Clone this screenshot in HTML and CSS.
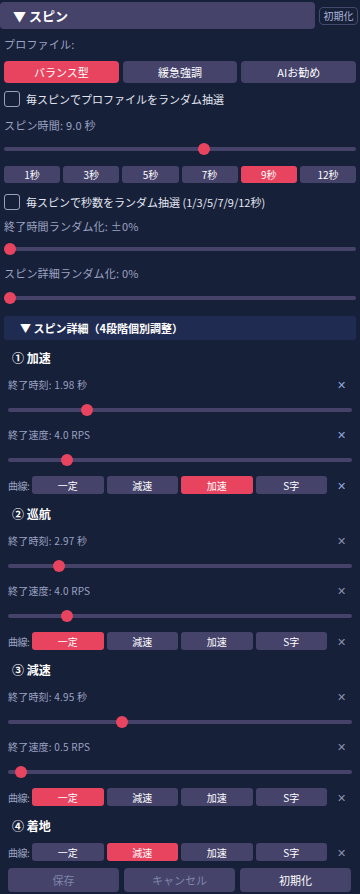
FILE: index.html
```html
<!DOCTYPE html>
<html lang="ja">
<head>
<meta charset="UTF-8">
<meta name="viewport" content="width=device-width, initial-scale=1.0">
<title>スピン設定</title>
<link rel="stylesheet" href="styles.css">
</head>
<body>
<!-- Spin header -->
<div class="topbar">
  <div class="topbar-title">▼ スピン</div>
  <button class="reset-small">初期化</button>
</div>

<div class="panel">
  <div class="label">プロファイル:</div>
  <div class="profiles">
    <button class="btn active">バランス型</button>
    <button class="btn">緩急強調</button>
    <button class="btn">AIお勧め</button>
  </div>
  <label class="check"><input type="checkbox"><span>毎スピンでプロファイルをランダム抽選</span></label>

  <div class="label gap-10">スピン時間: 9.0 秒</div>
  <input type="range" class="range gap-10" min="1" max="15" step="0.1" value="9">

  <div class="seconds">
    <button class="btn">1秒</button>
    <button class="btn">3秒</button>
    <button class="btn">5秒</button>
    <button class="btn">7秒</button>
    <button class="btn active">9秒</button>
    <button class="btn">12秒</button>
  </div>
  <label class="check gap-10"><input type="checkbox"><span>毎スピンで秒数をランダム抽選 (1/3/5/7/9/12秒)</span></label>

  <div class="label gap-8">終了時間ランダム化: ±0%</div>
  <input type="range" class="range gap-9" min="0" max="100" value="0">
  <div class="label gap-10">スピン詳細ランダム化: 0%</div>
  <input type="range" class="range gap-11" min="0" max="100" value="0">

  <!-- Spin detail -->
  <div class="section-bar">▼ スピン詳細（4段階個別調整）</div>
  <div class="detail">
    <div class="stage first">
      <div class="stage-title">① 加速</div>
      <div class="param"><span>終了時刻: 1.98 秒</span><button class="clear blue">✕</button></div>
      <input type="range" class="range small" min="0" max="100" step="0.1" value="22">
      <div class="param"><span>終了速度: 4.0 RPS</span><button class="clear blue">✕</button></div>
      <input type="range" class="range small" min="0" max="100" step="0.1" value="16">
      <div class="curve-row">
        <span class="curve-label">曲線:</span>
        <button class="btn">一定</button>
        <button class="btn">減速</button>
        <button class="btn active">加速</button>
        <button class="btn">S字</button>
        <button class="clear blue">✕</button>
      </div>
    </div>

    <div class="stage">
      <div class="stage-title">② 巡航</div>
      <div class="param"><span>終了時刻: 2.97 秒</span><button class="clear">✕</button></div>
      <input type="range" class="range small" min="0" max="100" step="0.1" value="13.6">
      <div class="param"><span>終了速度: 4.0 RPS</span><button class="clear">✕</button></div>
      <input type="range" class="range small" min="0" max="100" step="0.1" value="16">
      <div class="curve-row">
        <span class="curve-label">曲線:</span>
        <button class="btn active">一定</button>
        <button class="btn">減速</button>
        <button class="btn">加速</button>
        <button class="btn">S字</button>
        <button class="clear">✕</button>
      </div>
    </div>

    <div class="stage">
      <div class="stage-title">③ 減速</div>
      <div class="param"><span>終了時刻: 4.95 秒</span><button class="clear">✕</button></div>
      <input type="range" class="range small" min="0" max="100" step="0.1" value="32.5">
      <div class="param"><span>終了速度: 0.5 RPS</span><button class="clear">✕</button></div>
      <input type="range" class="range small" min="0" max="100" step="0.1" value="2.1">
      <div class="curve-row">
        <span class="curve-label">曲線:</span>
        <button class="btn active">一定</button>
        <button class="btn">減速</button>
        <button class="btn">加速</button>
        <button class="btn">S字</button>
        <button class="clear">✕</button>
      </div>
    </div>

    <div class="stage">
      <div class="stage-title">④ 着地</div>
      <div class="curve-row near">
        <span class="curve-label">曲線:</span>
        <button class="btn">一定</button>
        <button class="btn active">減速</button>
        <button class="btn">加速</button>
        <button class="btn">S字</button>
        <button class="clear">✕</button>
      </div>
    </div>

    <div class="actions">
      <button class="btn muted">保存</button>
      <button class="btn muted">キャンセル</button>
      <button class="btn">初期化</button>
    </div>
  </div>
</div>
</body>
</html>
```

FILE: styles.css
```css
/* General styles */
body {
  margin: 0;
  padding: 0;
  background-color: #172039;
  color: #e6e9f4;
  font-family: "Noto Sans CJK JP", "Noto Sans", sans-serif;
  font-size: 11px;
}

button {
  font-family: inherit;
  cursor: pointer;
}

/* Top bar */
.topbar {
  display: flex;
  align-items: center;
  margin: 2px 2px 0 0;
}

.topbar-title {
  flex: 1;
  height: 27px;
  line-height: 27px;
  padding-left: 13px;
  background-color: #46436b;
  border-radius: 4px;
  font-size: 13px;
  font-weight: bold;
  color: #fff;
}

.reset-small {
  margin-left: 4px;
  width: 39px;
  height: 18px;
  padding: 0;
  background: transparent;
  border: 1px solid #454a6c;
  border-radius: 4px;
  color: #aab3d8;
  font-size: 10px;
  line-height: 16px;
}

.panel {
  padding: 0 4px;
}

.label {
  margin-top: 7px;
  height: 16px;
  line-height: 16px;
  letter-spacing: 0.2px;
  color: #9ba2c2;
}

/* Buttons */
.btn {
  flex: 1;
  padding: 0;
  border: none;
  border-radius: 4px;
  background-color: #46436b;
  color: #fff;
}

.btn.active {
  background-color: #e8445f;
}

.profiles {
  display: flex;
  gap: 4px;
  margin-top: 9px;
}

.profiles .btn {
  height: 22px;
  font-size: 11px;
}

.seconds {
  display: flex;
  gap: 3px;
  margin-top: 11px;
}

.seconds .btn {
  height: 17px;
  font-size: 10px;
  border-radius: 3px;
}

/* Checkbox rows */
.check {
  display: flex;
  align-items: center;
  height: 17px;
  margin-top: 7px;
  color: #e3e6f1;
}

.check input {
  -webkit-appearance: none;
  appearance: none;
  width: 16px;
  height: 16px;
  margin: 0 6px 0 0;
  border: 1.5px solid #9aa0b9;
  border-radius: 3px;
  background: transparent;
}

/* Sliders */
.range {
  -webkit-appearance: none;
  appearance: none;
  display: block;
  width: 100%;
  height: 12px;
  margin: 0;
  background: transparent;
}

.range::-webkit-slider-runnable-track {
  height: 4px;
  background-color: #46436b;
  border-radius: 2px;
}

.range::-webkit-slider-thumb {
  -webkit-appearance: none;
  width: 12px;
  height: 12px;
  margin-top: -4px;
  border: none;
  border-radius: 50%;
  background-color: #e8445f;
}

/* Spacing helpers */
.panel .gap-8 { margin-top: 8px; }
.panel .gap-9 { margin-top: 9px; }
.panel .gap-10 { margin-top: 10px; }
.panel .gap-11 { margin-top: 11px; }

/* Spin detail */
.section-bar {
  margin-top: 12px;
  height: 24px;
  line-height: 24px;
  padding-left: 16px;
  background-color: #1f2b51;
  border-radius: 3px;
  font-weight: bold;
  color: #fff;
}

.detail {
  padding: 0 4px;
}

.stage {
  margin-top: 11px;
}

.stage.first {
  margin-top: 9px;
}

.stage-title {
  height: 18px;
  line-height: 18px;
  padding-left: 4px;
  font-size: 12px;
  font-weight: bold;
  color: #fff;
}

.param {
  display: flex;
  justify-content: space-between;
  align-items: center;
  height: 14px;
  margin-top: 10px;
  font-size: 10px;
  letter-spacing: 0.2px;
  color: #9ba2c2;
}

.detail .range.small {
  margin-top: 13px;
}

.detail .range.small + .param {
  margin-top: 11px;
}

.clear {
  flex: none;
  width: 22px;
  padding: 0;
  border: none;
  background: transparent;
  color: #8a91ad;
  font-size: 11px;
  text-align: center;
}

.clear.blue {
  color: #8ea4dc;
}

.curve-row {
  display: flex;
  align-items: center;
  gap: 3px;
  height: 18px;
  margin-top: 10px;
}

.curve-row.near {
  margin-top: 8px;
}

.curve-label {
  flex: none;
  width: 21px;
  white-space: nowrap;
  letter-spacing: -0.5px;
  font-size: 10px;
  color: #9ba2c2;
}

.curve-row .btn {
  height: 18px;
  font-size: 10px;
  border-radius: 3px;
}

/* Bottom actions */
.actions {
  display: flex;
  gap: 5px;
  margin: 7px 1px 0 0;
}

.actions .btn {
  height: 24px;
  font-size: 11px;
}

.actions .btn.muted {
  color: #7f86a9;
}
```
